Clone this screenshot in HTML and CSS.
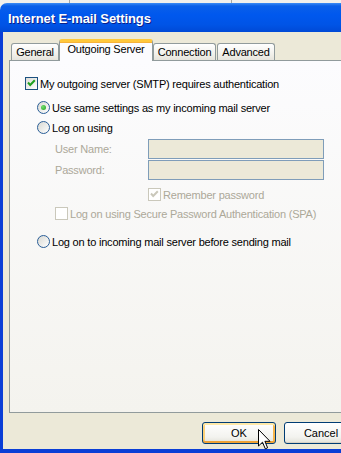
FILE: index.html
```html
<!DOCTYPE html>
<html lang="en">
<head>
    <meta charset="UTF-8">
    <meta name="viewport" content="width=device-width, initial-scale=1.0">
    <title>Internet E-mail Settings</title>
    <link rel="stylesheet" href="styles.css">
</head>
<body>
    <div class="backdrop">
        <div class="backdrop-cell"></div>
        <div class="backdrop-cell"></div>
        <div></div>
    </div>

    <div class="window">
        <div class="titlebar">Internet E-mail Settings</div>

        <div class="dialog">
            <div class="tabs">
                <div class="tab tab-general">General</div>
                <div class="tab tab-active">Outgoing Server</div>
                <div class="tab tab-connection">Connection</div>
                <div class="tab tab-advanced">Advanced</div>
            </div>

            <div class="panel">
                <label class="option main-check">
                    <span class="checkbox">
                        <svg viewBox="0 0 13 13"><path d="M3 5.5 L5.2 8 L9.8 3.2" /></svg>
                    </span>
                    My outgoing server (SMTP) requires authentication
                </label>

                <div class="auth-group">
                    <label class="option same-settings">
                        <span class="radio selected"></span>
                        Use same settings as my incoming mail server
                    </label>
                    <label class="option log-on">
                        <span class="radio"></span>
                        Log on using
                    </label>

                    <div class="logon-fields">
                        <div class="field">
                            <span class="field-label">User Name:</span>
                            <span class="textbox"></span>
                        </div>
                        <div class="field field-password">
                            <span class="field-label">Password:</span>
                            <span class="textbox"></span>
                        </div>
                        <label class="option disabled remember">
                            <span class="checkbox">
                                <svg viewBox="0 0 13 13"><path d="M3 5.5 L5.2 8 L9.8 3.2" /></svg>
                            </span>
                            Remember password
                        </label>
                        <label class="option disabled spa">
                            <span class="checkbox"></span>
                            Log on using Secure Password Authentication (SPA)
                        </label>
                    </div>

                    <label class="option before-sending">
                        <span class="radio"></span>
                        Log on to incoming mail server before sending mail
                    </label>
                </div>
            </div>

            <div class="buttons">
                <button class="button button-default">OK</button>
                <button class="button">Cancel</button>
            </div>
        </div>
    </div>

    <!-- mouse pointer resting on the OK button -->
    <svg class="cursor" width="13" height="21" viewBox="0 0 13 21">
        <path d="M0.5 0.5 V17 L4.5 13.2 L7.3 19.8 L9.6 18.8 L6.9 12.3 H12 Z" fill="#fff" stroke="#000" stroke-width="1" stroke-linejoin="miter" />
    </svg>
</body>
</html>
```

FILE: styles.css
```css
:root {
    --face: #ece9d8;
    --tab-border: #919b9c;
    --control-border: #1c5180;
    --check: #21a121;
    --disabled: #aca899;
    --disabled-border: #cac8bb;
    --textbox-border: #7f9db9;
    --frame: #0a3ed6;
}

body {
    margin: 0;
    overflow: hidden;
    background: #f2f1ec;
    font-family: "Liberation Sans", Arial, sans-serif;
    font-size: 11px;
    letter-spacing: -0.2px;
    color: #000;
}

.backdrop {
    display: grid;
    grid-template-columns: 70px 162px 1fr;
    height: 3px;
    background: #f1f0ec;
}

.backdrop-cell {
    border-right: 1px solid #a8a7a2;
}

.window {
    width: 367px;
}

.titlebar {
    height: 29px;
    box-sizing: border-box;
    padding: 2px 0 0 8px;
    line-height: 27px;
    border-radius: 7px 7px 0 0;
    background: linear-gradient(to bottom, #3b8cf5 0, #0a5fe8 3px, #0058ee 40%, #0054e6 75%, #0049d6 100%);
    color: #fff;
    font-weight: bold;
    font-size: 13px;
    letter-spacing: -0.1px;
    text-shadow: 1px 1px 0 #0a1f8a;
}

.dialog {
    background: var(--face);
    border-left: 3px solid var(--frame);
    border-bottom: 4px solid var(--frame);
    padding: 7px 9px 5px 6px;
}

/* tab strip */
.tabs {
    display: flex;
    align-items: flex-end;
    height: 21px;
    padding-left: 2px;
    position: relative;
    z-index: 1;
}

.tab {
    box-sizing: border-box;
    height: 17px;
    border: 1px solid var(--tab-border);
    border-bottom: none;
    border-radius: 3px 3px 0 0;
    background: linear-gradient(to bottom, #ffffff, #f2f1ec 60%, #e6e4dc);
    text-align: center;
    line-height: 16px;
}

.tab-general { width: 48px; }
.tab-connection { width: 63px; }
.tab-advanced { width: 58px; margin-left: 1px; }

.tab-active {
    width: 94px;
    height: 22px;
    margin-bottom: -1px;
    background: #fcfcfe;
    border-top: 3px solid #ffc83c;
    box-shadow: inset 0 1px 0 #f6b23a;
    line-height: 15px;
}

.panel {
    box-sizing: border-box;
    height: 353px;
    border: 1px solid var(--tab-border);
    background: linear-gradient(to bottom, #fcfcfe, #f4f3ee);
    padding: 16px 0 0 15px;
}

/* checkboxes and radio buttons */
.option {
    display: flex;
    align-items: center;
    gap: 2px;
    height: 13px;
    white-space: nowrap;
}

.checkbox {
    flex: none;
    box-sizing: border-box;
    width: 13px;
    height: 13px;
    border: 1px solid var(--control-border);
    background: linear-gradient(135deg, #dcdcd7, #ffffff);
}

.checkbox svg {
    display: block;
    width: 13px;
    height: 13px;
    margin: -1px;
}

.checkbox path {
    fill: none;
    stroke: var(--check);
    stroke-width: 2;
}

.radio {
    flex: none;
    box-sizing: border-box;
    width: 13px;
    height: 13px;
    border: 1px solid #2a5e97;
    border-radius: 50%;
    background: linear-gradient(135deg, #d8d8d2, #ffffff);
    display: flex;
    align-items: center;
    justify-content: center;
}

.radio.selected::after {
    content: "";
    width: 5px;
    height: 5px;
    border-radius: 50%;
    background: radial-gradient(circle at 35% 35%, #73de6e, #21a121);
}

.option.disabled {
    color: var(--disabled);
}

.option.disabled .checkbox {
    border-color: var(--disabled-border);
    background: #fff;
}

.option.disabled .checkbox path {
    stroke: var(--disabled-border);
}

.auth-group {
    margin-left: 12px;
}

.same-settings { margin-top: 11px; }
.log-on { margin-top: 7px; }
.before-sending { margin-top: 15px; }

.logon-fields {
    margin: 5px 0 0 18px;
}

.field {
    display: flex;
    align-items: center;
}

.field-password {
    margin-top: 1px;
}

.field-label {
    width: 93px;
    color: var(--disabled);
}

.textbox {
    box-sizing: border-box;
    width: 176px;
    height: 20px;
    border: 1px solid var(--textbox-border);
    background: var(--face);
}

.remember {
    margin: 8px 0 0 93px;
}

.spa {
    margin-top: 6px;
}

/* dialog buttons */
.buttons {
    display: flex;
    justify-content: flex-end;
    gap: 8px;
    margin-top: 9px;
}

.button {
    box-sizing: border-box;
    width: 74px;
    height: 22px;
    padding: 0;
    border: 1px solid #003c74;
    border-radius: 3px;
    background: linear-gradient(to bottom, #ffffff, #f3f3ef 70%, #e3e2da);
    font-family: inherit;
    font-size: 11px;
    color: #000;
    box-shadow: inset 0 -1px 0 #d6d0c5;
}

.button-default {
    box-shadow: inset 0 2px 0 #ffe9a8, inset 0 -2px 0 #f0a236, inset 2px 0 0 #fbd17a, inset -2px 0 0 #f6b64c;
}

.cursor {
    position: absolute;
    left: 258px;
    top: 429px;
}
```
